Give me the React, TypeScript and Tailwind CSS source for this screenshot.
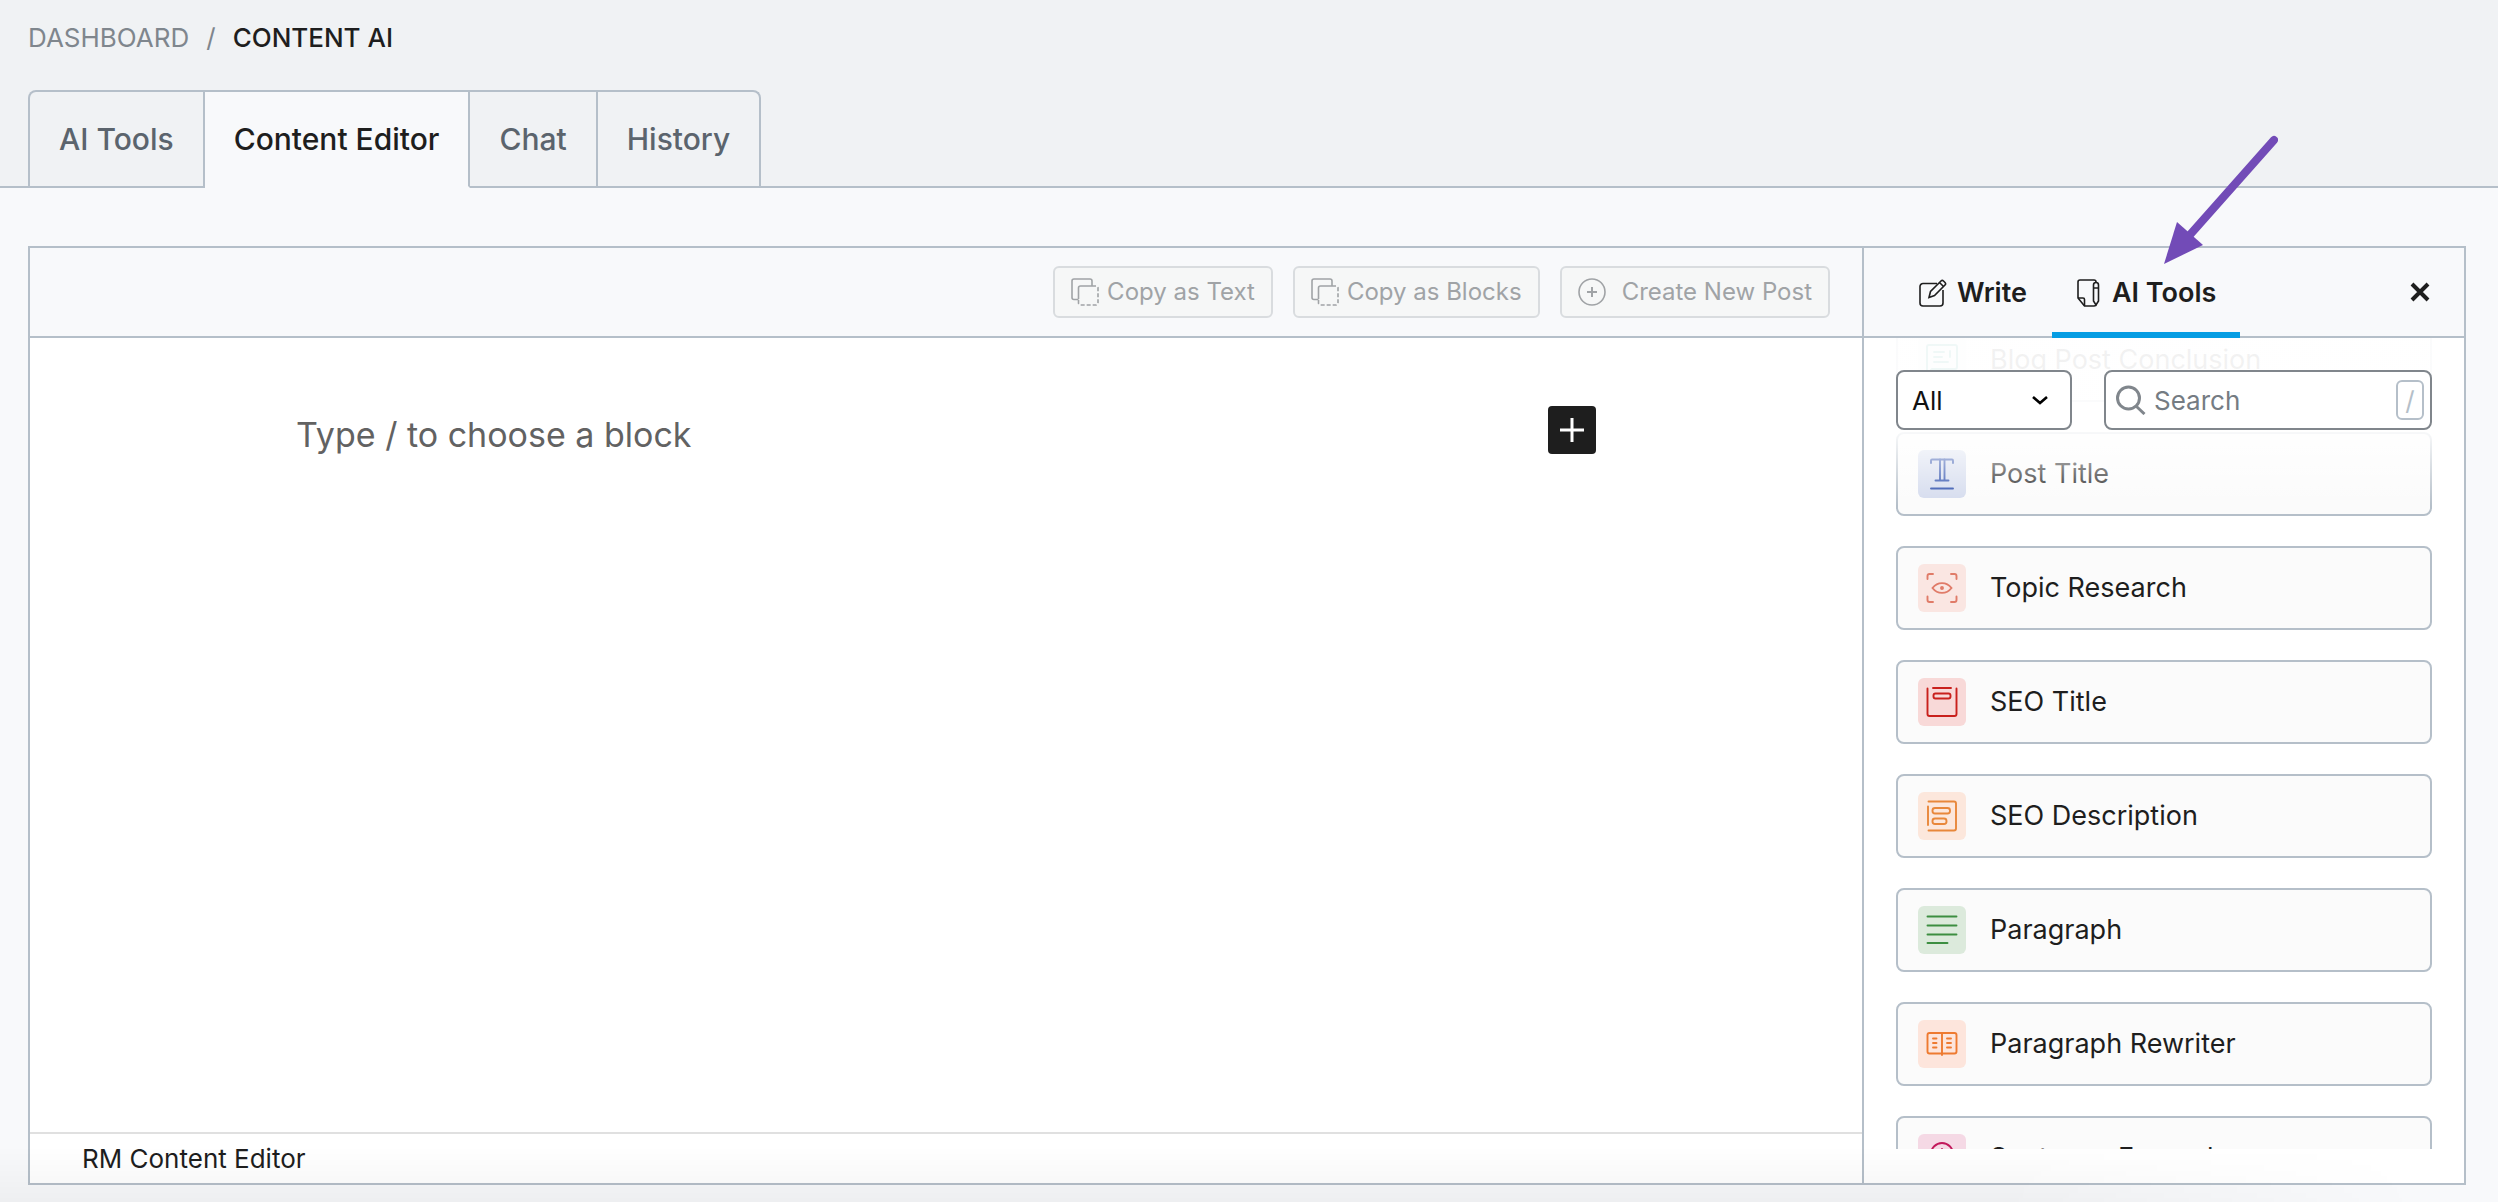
import { useState } from 'react'
import type { ReactNode } from 'react'

interface Tool {
  name: string
  tile: string
  icon: ReactNode
}

const tabs = ['AI Tools', 'Content Editor', 'Chat', 'History']

const tools: Tool[] = [
  {
    name: 'Blog Post Conclusion',
    tile: 'bg-[#e9f5f3] text-[#00897b]',
    icon: (
      <>
        <path d="M9 33V11a2 2 0 0 1 2-2h26a2 2 0 0 1 2 2v20a2 2 0 0 1-2 2H14l-5 5z" />
        <path d="M16 16h10M16 21h8M16 26h14M32 15v6" />
      </>
    ),
  },
  {
    name: 'Post Title',
    tile: 'bg-[#d3daed] text-[#2447a8]',
    icon: (
      <>
        <path d="M13 13v-2.5a1 1 0 0 1 1-1h20a1 1 0 0 1 1 1V13" />
        <path d="M22 9.5v21M26.5 9.5v21M17.5 30.5h13M13 38.5h22" />
      </>
    ),
  },
  {
    name: 'Topic Research',
    tile: 'bg-[#fae6e2] text-[#e07b68]',
    icon: (
      <>
        <path d="M9.5 15v-3a2 2 0 0 1 2-2H15M33 10h3.5a2 2 0 0 1 2 2v3M38.5 32.500V36a2 2 0 0 1-2 2H33M15 38h-3.5a2 2 0 0 1-2-2v-3.5" />
        <path d="M14.5 24c5-6.500 14-6.500 19 0-5 6.500-14 6.500-19 0z" />
        <circle cx="24" cy="24" r="1" />
      </>
    ),
  },
  {
    name: 'SEO Title',
    tile: 'bg-[#f8d9d8] text-[#c9201c]',
    icon: (
      <>
        <path d="M9.5 10.5V36a2 2 0 0 0 2 2h25a2 2 0 0 0 2-2V10.500M15 10h18" />
        <rect x="15.5" y="15.5" width="17" height="5" rx="2" />
      </>
    ),
  },
  {
    name: 'SEO Description',
    tile: 'bg-[#fce7dc] text-[#e8873a]',
    icon: (
      <>
        <path d="M10.5 9.5H36a2 2 0 0 1 2 2v25a2 2 0 0 1-2 2H10.500M10 14.500V33" />
        <rect x="14.5" y="16" width="17.5" height="5.5" rx="2.5" />
        <rect x="14.5" y="26.5" width="14" height="5.5" rx="2.5" />
      </>
    ),
  },
  {
    name: 'Paragraph',
    tile: 'bg-[#dceadc] text-[#3c8e41]',
    icon: <path d="M9.5 10.5h29M9.5 19.5h29M9.5 28.5h29M9.5 37h20" />,
  },
  {
    name: 'Paragraph Rewriter',
    tile: 'bg-[#fde5dc] text-[#ee7a30]',
    icon: (
      <>
        <rect x="9.5" y="13" width="29" height="20.5" rx="2" />
        <path d="M24 13v22M15 18.5h3.5M15 23h3.5M15 27.5h3.5M29 18.5h4M29 23h4M29 27.5h4" />
      </>
    ),
  },
  {
    name: 'Sentence Expander',
    tile: 'bg-[#f5d9e5] text-[#c2185b]',
    icon: (
      <>
        <circle cx="24" cy="20" r="11" />
        <path d="M24 15v10M19 20h10" />
      </>
    ),
  },
]

const CopyIcon = () => (
  <svg className="h-7 w-7 shrink-0" viewBox="0 0 28 28" fill="none" stroke="currentColor" strokeWidth="1.6">
    <path d="M7.5 21.5H3a2 2 0 0 1-2-2V3a2 2 0 0 1 2-2h16a2 2 0 0 1 2 2v5" />
    <path d="M7.5 21V10a2 2 0 0 1 2-2H21" />
    <path d="M21 8h4a2 2 0 0 1 2 2v15a2 2 0 0 1-2 2H9.5a2 2 0 0 1-2-2v-4" strokeDasharray="4 2" />
  </svg>
)

const PlusCircleIcon = () => (
  <svg className="h-7 w-7 shrink-0" viewBox="0 0 28 28" fill="none" stroke="currentColor" strokeWidth="1.6">
    <circle cx="14" cy="14" r="13" />
    <path d="M14 9v10M9 14h10" strokeWidth="2" />
  </svg>
)

const WriteIcon = () => (
  <svg className="h-7 w-7 shrink-0" viewBox="0 0 28 28" fill="none" stroke="currentColor" strokeWidth="1.6">
    <path d="M18 4.500H4a3 3 0 0 0-3 3V24a3 3 0 0 0 3 3h17a3 3 0 0 0 3-3V11" />
    <path d="M10 18.500l1.500-6L22 2a1.800 1.800 0 0 1 2.500 0l1.500 1.500a1.800 1.800 0 0 1 0 2.500L15.500 16.500zM20.500 3.500l4 4" />
  </svg>
)

const ToolsIcon = () => (
  <svg className="h-7 w-6 shrink-0" viewBox="0 0 24 28" fill="none" stroke="currentColor" strokeWidth="1.6">
    <path d="M20 4V3a2 2 0 0 0-2-2H4a2 2 0 0 0-2 2v16l6.500 8H18a2 2 0 0 0 2-2" />
    <path d="M2 19h5a1.500 1.500 0 0 1 1.500 1.500V27" />
    <path d="M17.500 9V6a2.500 2.500 0 0 1 5 0v16L20 26l-2.500-4V9zM17.500 9h5" />
  </svg>
)

const ToolbarButton = ({ icon, label, gap }: { icon: ReactNode; label: string; gap: string }) => (
  <button
    type="button"
    disabled
    className={`flex h-[52px] items-center rounded-md border-2 border-[#d9dcdf] bg-[#f6f7f7] px-4 text-2xl text-[#a0a3a6] ${gap}`}
  >
    {icon}
    {label}
  </button>
)

const ToolCard = ({ tool }: { tool: Tool }) => (
  <button
    type="button"
    className="flex h-[84px] shrink-0 items-center gap-6 rounded-lg border-2 border-[#b5bfc9] bg-[#fbfbfb] px-5 text-[27px] text-[#1e1e1e]"
  >
    <span className={`h-12 w-12 shrink-0 rounded-md ${tool.tile}`}>
      <svg viewBox="0 0 48 48" fill="none" stroke="currentColor" strokeWidth="1.9" strokeLinecap="round">
        {tool.icon}
      </svg>
    </span>
    {tool.name}
  </button>
)

const Sidebar = () => {
  const [search, setSearch] = useState('')

  return (
    <aside className="flex w-[602px] shrink-0 flex-col border-l-2 border-[#b5bfc9]">
      <div className="flex h-[90px] shrink-0 items-stretch border-b-2 border-[#b5bfc9] bg-[#f8f9fb] pl-[30px] pr-8 text-[27px] font-semibold text-[#1e1e1e]">
        <button type="button" className="flex items-center gap-[10px] px-[25px] pt-[2px]">
          <WriteIcon />
          Write
        </button>
        <button type="button" className="-mb-[2px] flex items-center gap-3 border-b-[6px] border-[#069de3] px-6 pt-[6px]">
          <ToolsIcon />
          AI Tools
        </button>
        <button type="button" aria-label="Close" className="ml-auto px-[2px]">
          <svg className="h-5 w-5" viewBox="0 0 20 20" fill="none" stroke="currentColor" strokeWidth="4">
            <path d="M2 2l16 16M18 2L2 18" />
          </svg>
        </button>
      </div>

      <div className="relative mb-[34px] min-h-0 flex-1 overflow-hidden px-8">
        <div className="-mt-5 flex flex-col gap-[30px]">
          {tools.map((tool) => (
            <ToolCard key={tool.name} tool={tool} />
          ))}
        </div>

        {/* Filter bar fades into the list below it */}
        <div className="absolute inset-x-0 top-0 flex h-[168px] items-start gap-8 bg-linear-to-b from-white/94 from-54% to-white/0 px-8 pt-8">
          <div className="relative w-44 shrink-0">
            <select
              aria-label="Category"
              className="h-[60px] w-full appearance-none rounded-lg border-2 border-[#80868c] bg-white px-[14px] text-[26px] text-[#111]"
            >
              <option>All</option>
            </select>
            <svg className="pointer-events-none absolute right-6 top-[22px] h-4 w-4" viewBox="0 0 16 16" fill="none" stroke="#000" strokeWidth="2.6">
              <path d="M1 5l7 6 7-6" />
            </svg>
          </div>
          <div className="flex h-[60px] min-w-0 flex-1 items-center gap-2 rounded-lg border-2 border-[#80868c] bg-white pl-[10px] pr-[6px]">
            <svg className="h-[30px] w-[30px] shrink-0" viewBox="0 0 30 30" fill="none" stroke="#80868c" strokeWidth="3">
              <circle cx="12.5" cy="13" r="11" />
              <path d="M20 21l8.500 8" />
            </svg>
            <input
              type="text"
              aria-label="Search tools"
              placeholder="Search"
              value={search}
              onChange={(e) => setSearch(e.target.value)}
              className="min-w-0 flex-1 text-[26px] outline-none placeholder:text-[#757c83]"
            />
            <kbd className="flex h-10 w-7 items-center justify-center rounded-md border-2 border-[#b5bfc9] font-[Inter,sans-serif] text-[26px] text-[#b5bfc9]">
              /
            </kbd>
          </div>
        </div>
      </div>
    </aside>
  )
}

export default function App() {
  const [activeTab, setActiveTab] = useState('Content Editor')

  return (
    <div className="relative flex h-screen min-h-[800px] flex-col overflow-hidden bg-[#f8f9fb] font-[Inter,sans-serif]">
      <header className="shrink-0 bg-[#f0f2f4] px-7 pt-[19px]">
        <nav aria-label="Breadcrumb" className="flex h-9 items-center gap-[17px] text-[26px] uppercase">
          <a href="#dashboard" className="text-[#7f868d]">Dashboard</a>
          <span className="text-[#7f868d]">/</span>
          <span className="font-medium text-[#1e1e1e]">Content AI</span>
        </nav>

        <div className="-mx-7 mt-[35px] flex border-b-2 border-[#b5bfc9] px-7">
          <div className="-mb-[2px] flex h-[98px] divide-x-2 divide-[#b5bfc9] rounded-t-lg border-2 border-b-0 border-[#b5bfc9]">
            {tabs.map((tab) => (
              <button
                key={tab}
                type="button"
                onClick={() => setActiveTab(tab)}
                className={`border-b-2 px-[29px] text-[30px] font-medium ${
                  tab === activeTab
                    ? 'border-b-[#f8f9fb] bg-[#f8f9fb] text-[#1e1e1e]'
                    : 'border-b-[#b5bfc9] text-[#5b646d]'
                }`}
              >
                {tab}
              </button>
            ))}
          </div>
        </div>
      </header>

      <main className="mb-[17px] ml-7 mr-8 mt-[58px] flex min-h-0 flex-1 border-2 border-[#b5bfc9] bg-white">
        <section className="flex min-w-0 flex-1 flex-col">
          <div className="flex h-[90px] shrink-0 items-center justify-end gap-5 border-b-2 border-[#b5bfc9] bg-[#f8f9fb] pr-8">
            <ToolbarButton icon={<CopyIcon />} label="Copy as Text" gap="gap-2" />
            <ToolbarButton icon={<CopyIcon />} label="Copy as Blocks" gap="gap-2" />
            <ToolbarButton icon={<PlusCircleIcon />} label="Create New Post" gap="gap-4" />
          </div>

          <div className="mx-auto flex w-full max-w-[1300px] flex-1 items-start justify-between pt-[68px]">
            <p className="pt-1 text-[34px] leading-[50px] text-[#626262]">Type / to choose a block</p>
            <button type="button" aria-label="Add block" className="flex h-12 w-12 items-center justify-center rounded bg-[#1e1e1e]">
              <svg className="h-6 w-6" viewBox="0 0 24 24" stroke="#fff" strokeWidth="3">
                <path d="M12 0v24M0 12h24" />
              </svg>
            </button>
          </div>

          <footer className="flex h-[51px] shrink-0 items-center border-t-2 border-[#e0e0e0] px-[52px] text-[26px] text-[#1e1e1e]">
            RM Content Editor
          </footer>
        </section>

        <Sidebar />
      </main>

      {/* Soft shade along the bottom edge */}
      <div className="pointer-events-none absolute inset-x-0 bottom-0 h-14 bg-linear-to-b from-black/0 to-black/4 [mask-image:linear-gradient(to_right,black_80%,transparent_97%)]" />

      {/* Pointer to the AI Tools tab */}
      <svg className="pointer-events-none absolute right-[220px] top-[134px] h-[134px] w-[118px]" viewBox="0 0 118 134">
        <path d="M114 6L28 103" stroke="#724bb7" strokeWidth="8" strokeLinecap="round" />
        <path d="M4 130L17 88l26 23z" fill="#724bb7" />
      </svg>
    </div>
  )
}
